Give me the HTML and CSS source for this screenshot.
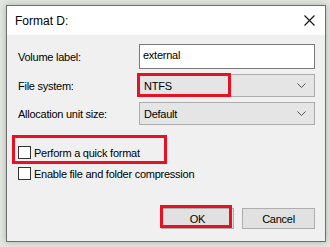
FILE: index.html
```html
<!DOCTYPE html>
<html lang="en">
  <head>
    <meta charset="UTF-8" />
    <title>Format D:</title>
    <link rel="stylesheet" href="styles.css">
  </head>
  <body>
    <div class="dialog">
      <div class="titlebar">
        <span class="title">Format D:</span>
        <svg class="close" width="11" height="11" viewBox="0 0 11 11">
          <path d="M0.5 0.5 L10.5 10.5 M10.5 0.5 L0.5 10.5" stroke="#111" stroke-width="1.1" />
        </svg>
      </div>
      <div class="content">
        <div class="form">
          <label class="label">Volume label:</label>
          <div class="textbox">external</div>
          <label class="label">File system:</label>
          <div class="select">
            <span>NTFS</span>
            <svg width="9" height="5" viewBox="0 0 9 5"><path d="M0.5 0.5 L4.5 4.5 L8.5 0.5" fill="none" stroke="#555" /></svg>
          </div>
          <label class="label">Allocation unit size:</label>
          <div class="select">
            <span>Default</span>
            <svg width="9" height="5" viewBox="0 0 9 5"><path d="M0.5 0.5 L4.5 4.5 L8.5 0.5" fill="none" stroke="#555" /></svg>
          </div>
        </div>
        <div class="checks">
          <div class="check"><span class="box"></span>Perform a quick format</div>
          <div class="check"><span class="box"></span>Enable file and folder compression</div>
        </div>
        <div class="buttons">
          <button class="btn">OK</button>
          <button class="btn">Cancel</button>
        </div>
      </div>
      <div class="mark mark-fs"></div>
      <div class="mark mark-quick"></div>
      <div class="mark mark-ok"></div>
    </div>
  </body>
</html>
```

FILE: styles.css
```css
body {
  margin: 0;
  width: 330px;
  height: 247px;
  overflow: hidden;
  background: #e4e8e2;
  font-family: "Liberation Sans", Arial, sans-serif;
  font-size: 11px;
  letter-spacing: -0.25px;
  color: #000;
}
.dialog {
  position: relative;
  box-sizing: border-box;
  width: 320px;
  height: 237px;
  margin: 5px 0 0 6px;
  border: 1px solid #6e6e6e;
  background: #f0f0f0;
  box-shadow: 0 0 7px rgba(60, 70, 60, 0.35);
}
.titlebar {
  display: flex;
  align-items: center;
  justify-content: space-between;
  height: 29px;
  padding: 0 10px 0 8px;
  background: #fff;
}
.title {
  font-size: 12px;
  letter-spacing: 0;
}
.content {
  padding: 9px 10px 0 11px;
}
.form {
  display: grid;
  grid-template-columns: 121px 176px;
  grid-template-rows: 25px 23px 23px;
  row-gap: 5px;
  align-items: center;
}
.textbox {
  box-sizing: border-box;
  height: 25px;
  padding: 4px 3px;
  border: 1px solid #7a7a7a;
  background: #fff;
}
.select {
  display: flex;
  align-items: center;
  justify-content: space-between;
  box-sizing: border-box;
  height: 23px;
  padding: 0 8px 0 4px;
  border: 1px solid #adadad;
  background: #e5e5e5;
}
.checks {
  display: flex;
  flex-direction: column;
  gap: 8px;
  margin-top: 21px;
}
.check {
  display: flex;
  align-items: center;
  height: 13px;
}
.box {
  box-sizing: border-box;
  width: 13px;
  height: 13px;
  margin-right: 3px;
  border: 1px solid #333;
  background: #fff;
}
.buttons {
  display: flex;
  justify-content: flex-end;
  gap: 8px;
  margin-top: 28px;
}
.btn {
  box-sizing: border-box;
  width: 73px;
  height: 21px;
  padding: 0;
  border: 1px solid #adadad;
  background: #e1e1e1;
  font-family: inherit;
  font-size: 11px;
  letter-spacing: inherit;
  color: #000;
}
.mark {
  position: absolute;
  box-sizing: border-box;
  border: 3px solid #e81123;
}
.mark-fs {
  left: 130px;
  top: 67px;
  width: 94px;
  height: 24px;
}
.mark-quick {
  left: 5px;
  top: 129px;
  width: 155px;
  height: 29px;
}
.mark-ok {
  left: 153px;
  top: 199px;
  width: 72px;
  height: 23px;
}
```
